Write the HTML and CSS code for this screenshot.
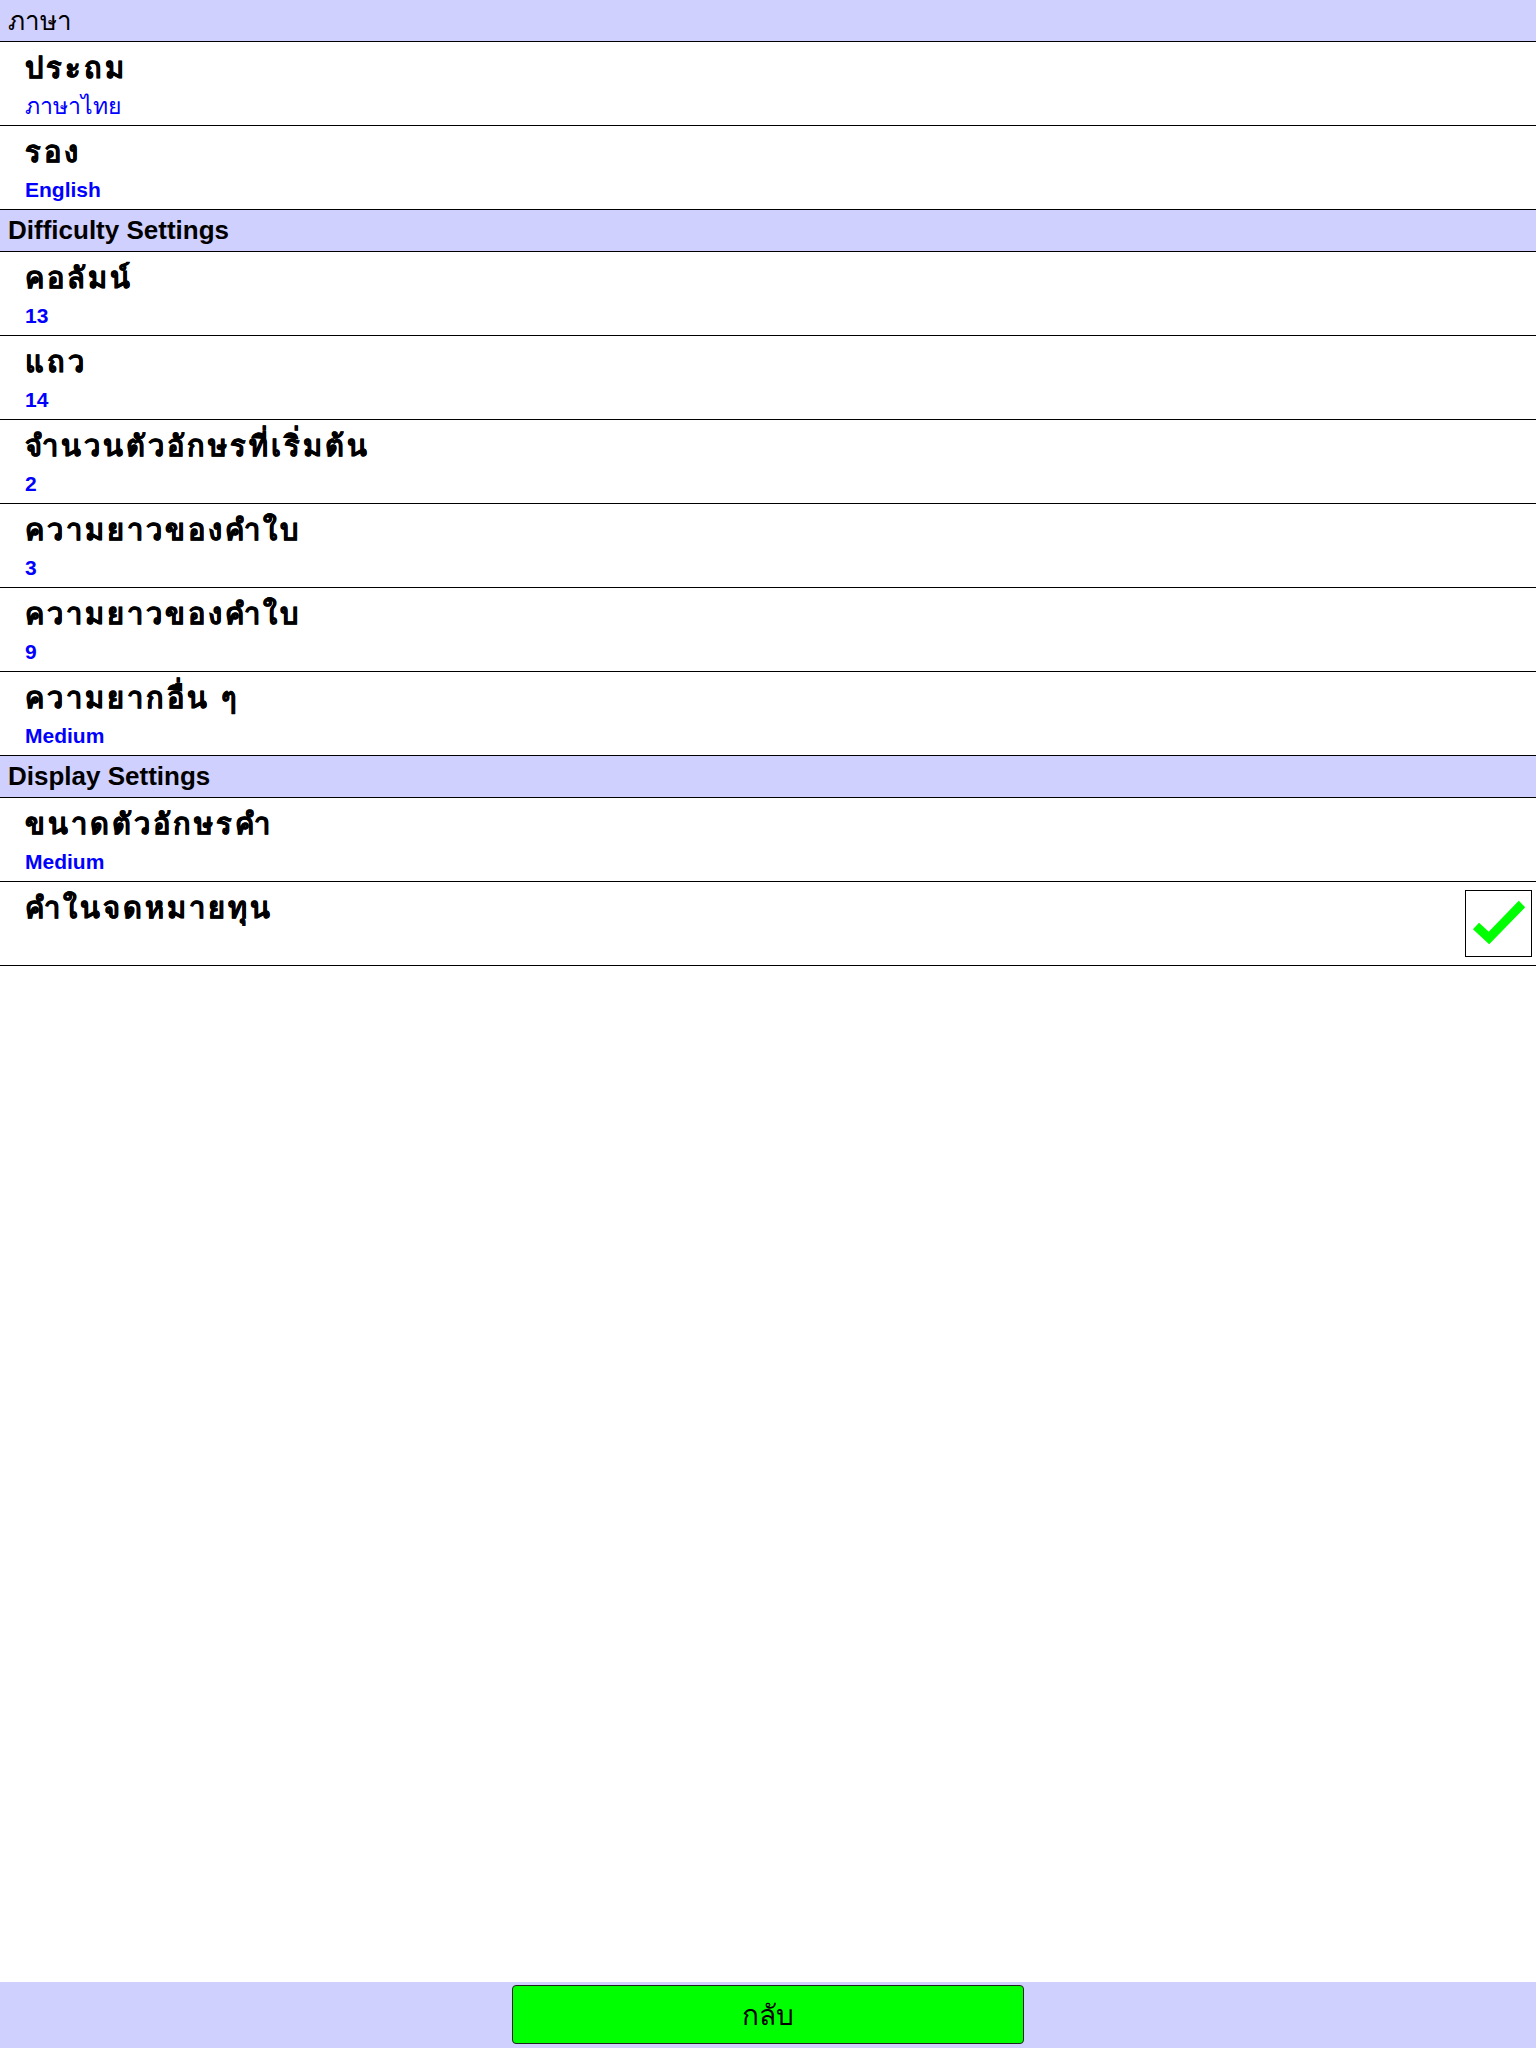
FILE: index.html
```html
<!DOCTYPE html>
<html lang="th">
<head>
<meta charset="utf-8">
<title>Settings</title>
<link rel="stylesheet" href="styles.css">
</head>
<body>
<div class="page">
  <div class="list">
    <div class="section">ภาษา</div>
    <div class="row"><div class="label">ประถม</div><div class="value thai">ภาษาไทย</div></div>
    <div class="row"><div class="label">รอง</div><div class="value">English</div></div>
    <div class="section">Difficulty Settings</div>
    <div class="row"><div class="label">คอลัมน์</div><div class="value">13</div></div>
    <div class="row"><div class="label">แถว</div><div class="value">14</div></div>
    <div class="row"><div class="label">จำนวนตัวอักษรที่เริ่มต้น</div><div class="value">2</div></div>
    <div class="row"><div class="label">ความยาวของคำใบ</div><div class="value">3</div></div>
    <div class="row"><div class="label">ความยาวของคำใบ</div><div class="value">9</div></div>
    <div class="row"><div class="label">ความยากอื่น ๆ</div><div class="value">Medium</div></div>
    <div class="section">Display Settings</div>
    <div class="row"><div class="label">ขนาดตัวอักษรคำ</div><div class="value">Medium</div></div>
    <div class="row check-row">
      <div class="label">คำในจดหมายทุน</div>
      <div class="checkbox">
        <svg viewBox="0 0 65 65" width="65" height="65"><path d="M10 35 L23 47 L56 13" fill="none" stroke="#00ff00" stroke-width="9"/></svg>
      </div>
    </div>
  </div>
  <div class="footer">
    <button class="back">กลับ</button>
  </div>
</div>
</body>
</html>
```
FILE: styles.css
```css
html, body {
  margin: 0;
  padding: 0;
  background: #ffffff;
}
.page {
  display: flex;
  flex-direction: column;
  min-height: 100vh;
  font-family: "Liberation Sans", Arial, sans-serif;
  color: #000;
}
.list {
  flex: 1;
}
.section {
  height: 41px;
  border-bottom: 1px solid #000;
  background: #d0d0ff;
  box-sizing: content-box;
  display: flex;
  align-items: center;
  padding-left: 8px;
  font-size: 26px;
  font-weight: bold;
}
.section:first-child {
  font-weight: normal;
}
.row {
  height: 83px;
  border-bottom: 1px solid #000;
  padding-left: 25px;
  position: relative;
  display: flex;
  flex-direction: column;
}
.label {
  font-size: 29px;
  font-weight: bold;
  letter-spacing: 3px;
  margin-top: 8px;
  line-height: 36px;
  -webkit-text-stroke: 0.4px #000;
}
.value {
  color: #0000ff;
  font-size: 21px;
  font-weight: bold;
  line-height: 28px;
  margin-top: 6px;
}
.value.thai {
  font-weight: normal;
  font-size: 23px;
}
.check-row {
  flex-direction: row;
  justify-content: space-between;
  align-items: flex-start;
  padding-right: 4px;
}
.checkbox {
  margin-top: 8px;
  width: 65px;
  height: 65px;
  border: 1px solid #000;
}
.checkbox svg {
  display: block;
  width: 65px;
  height: 65px;
}
.footer {
  height: 66px;
  background: #d0d0ff;
  display: flex;
  justify-content: center;
  align-items: flex-start;
  padding-top: 3px;
  box-sizing: border-box;
}
.back {
  width: 512px;
  height: 59px;
  background: #00ff00;
  border: 1px solid #222;
  border-radius: 4px;
  font-family: "Liberation Sans", Arial, sans-serif;
  font-size: 28px;
  color: #000;
  padding: 0;
}
```
